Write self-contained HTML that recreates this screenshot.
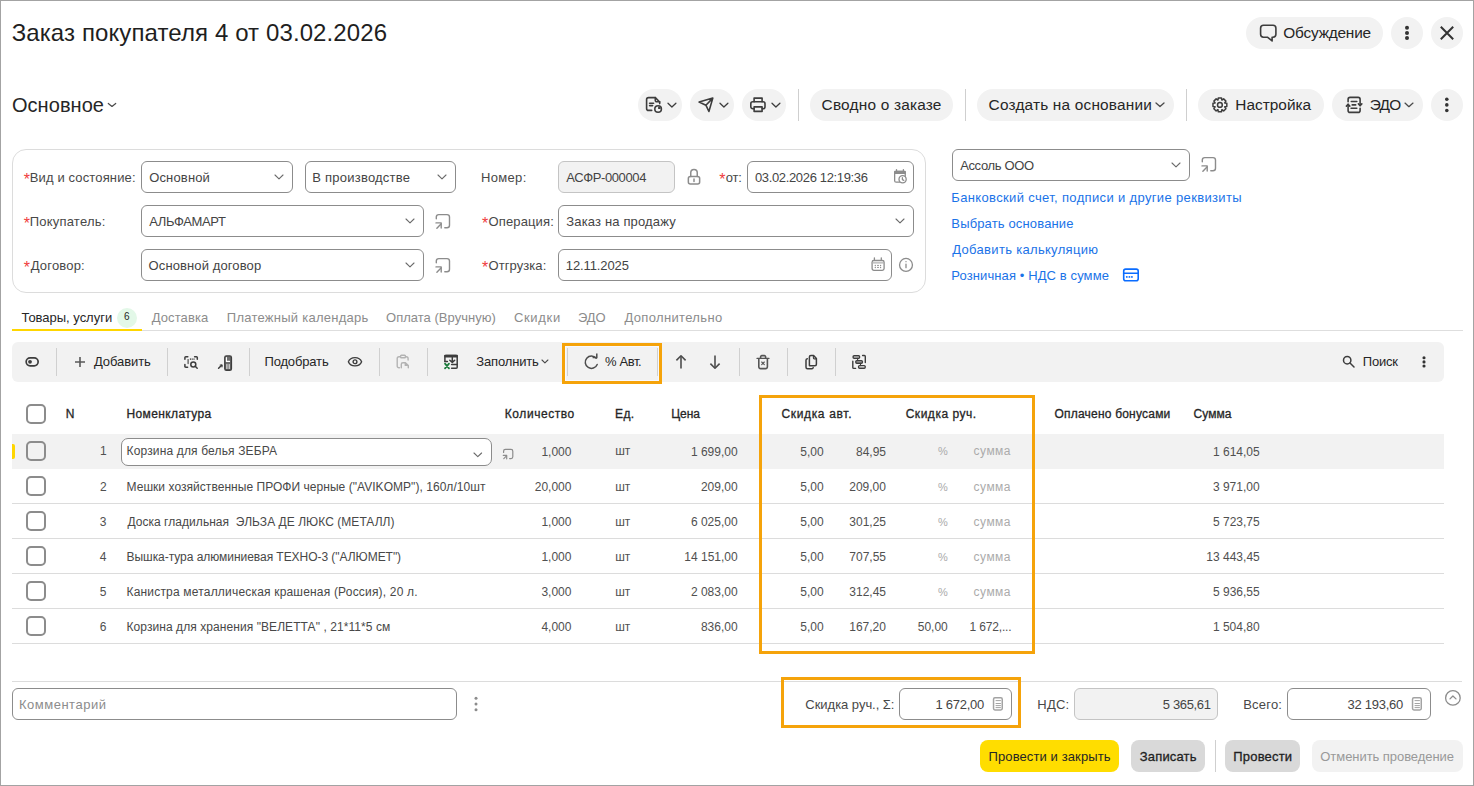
<!DOCTYPE html>
<html><head><meta charset="utf-8"><style>
html,body{margin:0;padding:0;background:#fff;}
body{width:1474px;height:786px;position:relative;overflow:hidden;font-family:'Liberation Sans', sans-serif;}
.a{position:absolute;box-sizing:content-box;}
.t{white-space:pre;}
svg.a{overflow:visible}
</style></head><body>
<div class="a" style="left:0px;top:0px;width:1472px;height:784px;border:1px solid #a3a3a3;background:#fff"></div>
<div class="a t" style="left:11.70px;top:20.68px;font-size:24px;line-height:24px;color:#1f1f1f;letter-spacing:0.105px;">Заказ покупателя 4 от 03.02.2026</div>
<div class="a" style="left:1246px;top:17px;width:137px;height:32px;background:#f2f2f2;border-radius:16.0px"></div>
<div class="a" style="left:1391px;top:17px;width:32px;height:32px;background:#f2f2f2;border-radius:16.0px"></div>
<div class="a" style="left:1431px;top:17px;width:32px;height:32px;background:#f2f2f2;border-radius:16.0px"></div>
<svg class="a" style="left:1258px;top:23px;" width="20" height="20" viewBox="0 0 20 20" fill="none" stroke="#3d3d3d" stroke-width="1.6" stroke-linecap="round" stroke-linejoin="round"><path d="M5.5 14.2 H9.4 L14.1 17.9 V14.2 H15 A2.9 2.9 0 0 0 17.9 11.3 V5.2 A2.9 2.9 0 0 0 15 2.3 H5.5 A2.9 2.9 0 0 0 2.6 5.2 V11.3 A2.9 2.9 0 0 0 5.5 14.2 Z"/></svg>
<div class="a t" style="left:1283.30px;top:24.96px;font-size:15.4px;line-height:15.4px;color:#262626;letter-spacing:-0.206px;">Обсуждение</div>
<svg class="a" style="left:1400px;top:22px;" width="14" height="22" viewBox="0 0 14 22" fill="none" stroke="#3d3d3d" stroke-width="1.5" stroke-linecap="round" stroke-linejoin="round"><circle cx="7" cy="5.8" r="2" fill="#333" stroke="none"/><circle cx="7" cy="11" r="2" fill="#333" stroke="none"/><circle cx="7" cy="16" r="2" fill="#333" stroke="none"/></svg>
<svg class="a" style="left:1437px;top:23px;stroke-linecap:butt" width="20" height="20" viewBox="0 0 20 20" fill="none" stroke="#333" stroke-width="2" stroke-linecap="round" stroke-linejoin="round"><path d="M3.8 3.8 L16.2 16.2 M16.2 3.8 L3.8 16.2"/></svg>
<div class="a t" style="left:11.95px;top:95.07px;font-size:20px;line-height:20px;color:#262626;letter-spacing:0.057px;">Основное</div>
<svg class="a" style="left:106px;top:101px;" width="12" height="8" viewBox="0 0 12 8" fill="none" stroke="#4a4a4a" stroke-width="1.2" stroke-linecap="round" stroke-linejoin="round"><path d="M2.3 2.5 L6 5.5 L9.7 2.5"/></svg>
<div class="a" style="left:638px;top:89px;width:44px;height:32px;background:#f2f2f2;border-radius:16.0px"></div>
<div class="a" style="left:690px;top:89px;width:44px;height:32px;background:#f2f2f2;border-radius:16.0px"></div>
<div class="a" style="left:742px;top:89px;width:44px;height:32px;background:#f2f2f2;border-radius:16.0px"></div>
<svg class="a" style="left:640px;top:92px;" width="44" height="26" viewBox="0 0 44 26" fill="none" stroke="#3d3d3d" stroke-width="1.6" stroke-linecap="round" stroke-linejoin="round"><path d="M11.7 18.4 H8.6 A2 2 0 0 1 6.6 16.4 V7.6 A2 2 0 0 1 8.6 5.6 H15.3 L19.7 10 V11.6"/><path d="M15.3 5.6 V8.4 A1.4 1.4 0 0 0 16.7 9.8 H19.7"/><path d="M9.6 11.2 H13.6 M9.6 13.6 H12.6"/><circle cx="18.1" cy="17" r="3.3"/><path d="M18.1 17 V14.5 A2.5 2.5 0 0 1 20.6 17 Z" fill="#3d3d3d" stroke="none"/><path d="M28 11.3 L31.9 15 L35.9 11.3" stroke-width="1.3"/></svg>
<svg class="a" style="left:692px;top:92px;" width="44" height="26" viewBox="0 0 44 26" fill="none" stroke="#3d3d3d" stroke-width="1.6" stroke-linecap="round" stroke-linejoin="round"><path d="M7.1 10.1 L20.8 6.1 L16.9 19.5 L13.9 13.2 Z M13.9 13.2 L20.8 6.1"/><path d="M28 11.3 L31.9 15 L35.9 11.3" stroke-width="1.3"/></svg>
<svg class="a" style="left:744px;top:92px;" width="44" height="26" viewBox="0 0 44 26" fill="none" stroke="#3d3d3d" stroke-width="1.6" stroke-linecap="round" stroke-linejoin="round"><path d="M10.1 16.7 H8.8 A2 2 0 0 1 6.8 14.7 V11.7 A2 2 0 0 1 8.8 9.7 H19 A2 2 0 0 1 21 11.7 V14.7 A2 2 0 0 1 19 16.7 H18.1"/><path d="M10.1 9.7 V6.1 H18.1 V9.7"/><rect x="10.1" y="14.9" width="8" height="4.5"/><path d="M28 11.3 L31.9 15 L35.9 11.3" stroke-width="1.3"/></svg>
<div class="a" style="left:798px;top:89px;width:1px;height:32px;background:#cfcfcf"></div>
<div class="a" style="left:810px;top:89px;width:143px;height:32px;background:#f2f2f2;border-radius:16.0px"></div>
<div class="a t" style="left:821.60px;top:96.76px;font-size:15.4px;line-height:15.4px;color:#262626;letter-spacing:0.200px;">Сводно о заказе</div>
<div class="a" style="left:965px;top:89px;width:1px;height:32px;background:#cfcfcf"></div>
<div class="a" style="left:977px;top:89px;width:197px;height:32px;background:#f2f2f2;border-radius:16.0px"></div>
<div class="a t" style="left:988.60px;top:96.76px;font-size:15.4px;line-height:15.4px;color:#262626;letter-spacing:0.189px;">Создать на основании</div>
<svg class="a" style="left:1154px;top:101px;" width="12" height="8" viewBox="0 0 12 8" fill="none" stroke="#4a4a4a" stroke-width="1.3" stroke-linecap="round" stroke-linejoin="round"><path d="M2 2 L6 5.6 L10 2"/></svg>
<div class="a" style="left:1186px;top:89px;width:1px;height:32px;background:#cfcfcf"></div>
<div class="a" style="left:1198px;top:89px;width:126px;height:32px;background:#f2f2f2;border-radius:16.0px"></div>
<svg class="a" style="left:1210px;top:95px;" width="20" height="20" viewBox="0 0 20 20" fill="none" stroke="#3d3d3d" stroke-width="1.5" stroke-linecap="round" stroke-linejoin="round"><path d="M7.95 5.08 L8.30 2.98 L11.50 2.98 L11.85 5.08 L11.93 5.11 L13.66 3.88 L15.92 6.14 L14.69 7.87 L14.72 7.95 L16.82 8.30 L16.82 11.50 L14.72 11.85 L14.69 11.93 L15.92 13.66 L13.66 15.92 L11.93 14.69 L11.85 14.72 L11.50 16.82 L8.30 16.82 L7.95 14.72 L7.87 14.69 L6.14 15.92 L3.88 13.66 L5.11 11.93 L5.08 11.85 L2.98 11.50 L2.98 8.30 L5.08 7.95 L5.11 7.87 L3.88 6.14 L6.14 3.88 L7.87 5.11 Z"/><circle cx="9.9" cy="9.9" r="2.4"/></svg>
<div class="a t" style="left:1235.25px;top:96.76px;font-size:15.4px;line-height:15.4px;color:#262626;letter-spacing:0.019px;">Настройка</div>
<div class="a" style="left:1332px;top:89px;width:91px;height:32px;background:#f2f2f2;border-radius:16.0px"></div>
<svg class="a" style="left:1340px;top:92px;" width="30" height="26" viewBox="0 0 30 26" fill="none" stroke="#3d3d3d" stroke-width="1.6" stroke-linecap="round" stroke-linejoin="round"><path d="M8.1 9.8 V7.4 A2 2 0 0 1 10.1 5.4 H18.1 A2 2 0 0 1 20.1 7.4 V13.4"/><path d="M18.4 11.9 L20.1 13.6 L21.8 11.9"/><path d="M20.1 16.3 V18.4 A2 2 0 0 1 18.1 20.4 H10.1 A2 2 0 0 1 8.1 18.4 V12.4"/><path d="M6.4 14.1 L8.1 12.4 L9.8 14.1"/><path d="M11.3 9.5 H16.8 M12.2 12.9 H15.7 M11.1 16.2 H16.8"/></svg>
<div class="a t" style="left:1369.70px;top:96.76px;font-size:15.4px;line-height:15.4px;color:#262626;letter-spacing:-0.725px;">ЭДО</div>
<svg class="a" style="left:1403px;top:101px;" width="12" height="8" viewBox="0 0 12 8" fill="none" stroke="#4a4a4a" stroke-width="1.3" stroke-linecap="round" stroke-linejoin="round"><path d="M2 2.1 L5.9 5.65 L10 2.1"/></svg>
<div class="a" style="left:1431px;top:89px;width:32px;height:32px;background:#f2f2f2;border-radius:16.0px"></div>
<svg class="a" style="left:1440px;top:94px;" width="14" height="22" viewBox="0 0 14 22" fill="none" stroke="#3d3d3d" stroke-width="1.5" stroke-linecap="round" stroke-linejoin="round"><circle cx="6.8" cy="5.3" r="1.8" fill="#333" stroke="none"/><circle cx="6.8" cy="10.9" r="1.8" fill="#333" stroke="none"/><circle cx="6.8" cy="16.5" r="1.8" fill="#333" stroke="none"/></svg>
<div class="a" style="left:12px;top:149px;width:912px;height:142px;border:1px solid #dcdcdc;border-radius:14px"></div>
<div class="a t" style="left:23.75px;top:171.86px;font-size:16px;line-height:16px;color:#f03c3c;">*</div>
<div class="a t" style="left:29.75px;top:171.00px;font-size:13px;line-height:13px;color:#484848;letter-spacing:0.137px;">Вид и состояние:</div>
<div class="a" style="left:141px;top:161px;width:150px;height:30px;border:1px solid #8c8c8c;border-radius:6px;background:#fff"></div>
<svg class="a" style="left:273px;top:173.0px;" width="12" height="7.8" viewBox="0 0 12 7.8" fill="none" stroke="#6b6b6b" stroke-width="1.1" stroke-linecap="round" stroke-linejoin="round"><path d="M2 2 L6 5.8 L10 2"/></svg>
<div class="a t" style="left:149.20px;top:171.00px;font-size:13px;line-height:13px;color:#444;letter-spacing:0.157px;">Основной</div>
<div class="a" style="left:305px;top:161px;width:149px;height:30px;border:1px solid #8c8c8c;border-radius:6px;background:#fff"></div>
<svg class="a" style="left:436px;top:173.0px;" width="12" height="7.8" viewBox="0 0 12 7.8" fill="none" stroke="#6b6b6b" stroke-width="1.1" stroke-linecap="round" stroke-linejoin="round"><path d="M2 2 L6 5.8 L10 2"/></svg>
<div class="a t" style="left:312.35px;top:171.00px;font-size:13px;line-height:13px;color:#444;letter-spacing:0.223px;">В производстве</div>
<div class="a t" style="left:23.75px;top:215.86px;font-size:16px;line-height:16px;color:#f03c3c;">*</div>
<div class="a t" style="left:29.75px;top:215.00px;font-size:13px;line-height:13px;color:#484848;letter-spacing:0.205px;">Покупатель:</div>
<div class="a" style="left:141px;top:205px;width:281px;height:30px;border:1px solid #8c8c8c;border-radius:6px;background:#fff"></div>
<svg class="a" style="left:404px;top:217.0px;" width="12" height="7.8" viewBox="0 0 12 7.8" fill="none" stroke="#6b6b6b" stroke-width="1.1" stroke-linecap="round" stroke-linejoin="round"><path d="M2 2 L6 5.8 L10 2"/></svg>
<div class="a t" style="left:149.15px;top:215.00px;font-size:13px;line-height:13px;color:#444;letter-spacing:-0.375px;">АЛЬФАМАРТ</div>
<svg class="a" style="left:435px;top:213px;" width="17" height="17" viewBox="0 0 17 17" fill="none" stroke="#8c8c8c" stroke-width="1.4" stroke-linecap="round" stroke-linejoin="round"><path d="M1.3 5.8 V4.1 A2.5 2.5 0 0 1 3.8 1.6 H12 A2.5 2.5 0 0 1 14.5 4.1 V12.3 A2.5 2.5 0 0 1 12 14.8 H9.8"/><path d="M1.9 15.2 L6 11.1"/><path d="M1.0 9.9 H6.2 V15.1"/></svg>
<div class="a t" style="left:23.75px;top:259.86px;font-size:16px;line-height:16px;color:#f03c3c;">*</div>
<div class="a t" style="left:30.70px;top:259.00px;font-size:13px;line-height:13px;color:#484848;letter-spacing:0.193px;">Договор:</div>
<div class="a" style="left:141px;top:249px;width:281px;height:30px;border:1px solid #8c8c8c;border-radius:6px;background:#fff"></div>
<svg class="a" style="left:404px;top:261.0px;" width="12" height="7.8" viewBox="0 0 12 7.8" fill="none" stroke="#6b6b6b" stroke-width="1.1" stroke-linecap="round" stroke-linejoin="round"><path d="M2 2 L6 5.8 L10 2"/></svg>
<div class="a t" style="left:148.60px;top:259.00px;font-size:13px;line-height:13px;color:#444;letter-spacing:0.107px;">Основной договор</div>
<svg class="a" style="left:435px;top:257px;" width="17" height="17" viewBox="0 0 17 17" fill="none" stroke="#8c8c8c" stroke-width="1.4" stroke-linecap="round" stroke-linejoin="round"><path d="M1.3 5.8 V4.1 A2.5 2.5 0 0 1 3.8 1.6 H12 A2.5 2.5 0 0 1 14.5 4.1 V12.3 A2.5 2.5 0 0 1 12 14.8 H9.8"/><path d="M1.9 15.2 L6 11.1"/><path d="M1.0 9.9 H6.2 V15.1"/></svg>
<div class="a t" style="left:481.05px;top:171.00px;font-size:13px;line-height:13px;color:#484848;letter-spacing:0.320px;">Номер:</div>
<div class="a" style="left:558px;top:161px;width:115px;height:30px;border:1px solid #c4c4c4;border-radius:6px;background:#f2f2f2"></div>
<div class="a t" style="left:566.15px;top:171.00px;font-size:13px;line-height:13px;color:#444;letter-spacing:-0.380px;">АСФР-000004</div>
<svg class="a" style="left:686px;top:167px;" width="16" height="19" viewBox="0 0 16 19" fill="none" stroke="#8c8c8c" stroke-width="1.5" stroke-linecap="round" stroke-linejoin="round"><rect x="2.35" y="9.45" width="11.3" height="7.6" rx="2"/><path d="M4.75 9.45 V5.7 A3.25 3.25 0 0 1 11.25 5.7 V9.45"/><path d="M8 12 V14.6"/></svg>
<div class="a t" style="left:719.15px;top:171.86px;font-size:16px;line-height:16px;color:#f03c3c;">*</div>
<div class="a t" style="left:725.85px;top:171.00px;font-size:13px;line-height:13px;color:#484848;letter-spacing:-0.200px;">от:</div>
<div class="a" style="left:747px;top:161px;width:165px;height:30px;border:1px solid #8c8c8c;border-radius:6px;background:#fff"></div>
<div class="a t" style="left:754.90px;top:171.00px;font-size:13px;line-height:13px;color:#444;letter-spacing:-0.344px;">03.02.2026 12:19:36</div>
<svg class="a" style="left:892px;top:168px;" width="17" height="17" viewBox="0 0 17 17" fill="none" stroke="#8c8c8c" stroke-width="1.3" stroke-linecap="round" stroke-linejoin="round"><rect x="2.65" y="3.45" width="10.6" height="10.7" rx="1.5"/><rect x="2" y="2.8" width="11.9" height="3.2" rx="1" fill="#8c8c8c" stroke="none"/><path d="M4.5 1.6 V3.5 M11.4 1.6 V3.5"/><circle cx="10.6" cy="11.3" r="3.6" fill="#fff"/><path d="M10.4 9.7 V11.6 L11.8 12.4"/></svg>
<div class="a t" style="left:482.05px;top:215.86px;font-size:16px;line-height:16px;color:#f03c3c;">*</div>
<div class="a t" style="left:488.50px;top:215.00px;font-size:13px;line-height:13px;color:#484848;letter-spacing:0.131px;">Операция:</div>
<div class="a" style="left:558px;top:205px;width:354px;height:30px;border:1px solid #8c8c8c;border-radius:6px;background:#fff"></div>
<svg class="a" style="left:894px;top:217.0px;" width="12" height="7.8" viewBox="0 0 12 7.8" fill="none" stroke="#6b6b6b" stroke-width="1.1" stroke-linecap="round" stroke-linejoin="round"><path d="M2 2 L6 5.8 L10 2"/></svg>
<div class="a t" style="left:566.35px;top:215.00px;font-size:13px;line-height:13px;color:#444;letter-spacing:0.147px;">Заказ на продажу</div>
<div class="a t" style="left:482.05px;top:259.86px;font-size:16px;line-height:16px;color:#f03c3c;">*</div>
<div class="a t" style="left:488.50px;top:259.00px;font-size:13px;line-height:13px;color:#484848;letter-spacing:0.075px;">Отгрузка:</div>
<div class="a" style="left:558px;top:249px;width:332px;height:30px;border:1px solid #8c8c8c;border-radius:6px;background:#fff"></div>
<div class="a t" style="left:565.80px;top:259.00px;font-size:13px;line-height:13px;color:#444;letter-spacing:-0.106px;">12.11.2025</div>
<svg class="a" style="left:869px;top:255px;" width="18" height="18" viewBox="0 0 18 18" fill="none" stroke="#8c8c8c" stroke-width="1.3" stroke-linecap="round" stroke-linejoin="round"><rect x="3.1" y="5.5" width="12" height="9.8" rx="1.8"/><path d="M5.4 2.8 V4.8 M12.3 2.8 V4.8"/><path d="M3.1 7.9 H15.1" stroke="#b0b0b0" stroke-width="1.4"/><g fill="#8c8c8c" stroke="none"><circle cx="6.3" cy="10.5" r="0.65"/><rect x="8.2" y="9.9" width="1.6" height="1.1"/><circle cx="11.6" cy="10.5" r="0.65"/><circle cx="6.3" cy="12.5" r="0.65"/><rect x="8.2" y="11.9" width="1.6" height="1.1"/><circle cx="11.6" cy="12.5" r="0.65"/></g></svg>
<svg class="a" style="left:898px;top:257px;" width="16" height="16" viewBox="0 0 16 16" fill="none" stroke="#8c8c8c" stroke-width="1.3" stroke-linecap="round" stroke-linejoin="round"><circle cx="8" cy="7.9" r="6.45"/><path d="M8 4.6 V4.7 M8 7.1 V10.7"/></svg>
<div class="a" style="left:952px;top:149px;width:236px;height:30px;border:1px solid #8c8c8c;border-radius:6px;background:#fff"></div>
<svg class="a" style="left:1170px;top:161.0px;" width="12" height="7.8" viewBox="0 0 12 7.8" fill="none" stroke="#6b6b6b" stroke-width="1.1" stroke-linecap="round" stroke-linejoin="round"><path d="M2 2 L6 5.8 L10 2"/></svg>
<div class="a t" style="left:960.15px;top:159.00px;font-size:13px;line-height:13px;color:#444;letter-spacing:-0.356px;">Ассоль ООО</div>
<svg class="a" style="left:1201px;top:156px;" width="17" height="17" viewBox="0 0 17 17" fill="none" stroke="#8c8c8c" stroke-width="1.4" stroke-linecap="round" stroke-linejoin="round"><path d="M1.3 5.8 V4.1 A2.5 2.5 0 0 1 3.8 1.6 H12 A2.5 2.5 0 0 1 14.5 4.1 V12.3 A2.5 2.5 0 0 1 12 14.8 H9.8"/><path d="M1.9 15.2 L6 11.1"/><path d="M1.0 9.9 H6.2 V15.1"/></svg>
<div class="a t" style="left:951.35px;top:190.60px;font-size:13px;line-height:13px;color:#1a73e8;letter-spacing:0.346px;">Банковский счет, подписи и другие реквизиты</div>
<div class="a t" style="left:951.35px;top:216.60px;font-size:13px;line-height:13px;color:#1a73e8;letter-spacing:0.147px;">Выбрать основание</div>
<div class="a t" style="left:952.30px;top:242.60px;font-size:13px;line-height:13px;color:#1a73e8;letter-spacing:0.311px;">Добавить калькуляцию</div>
<div class="a t" style="left:951.35px;top:268.60px;font-size:13px;line-height:13px;color:#1a73e8;letter-spacing:0.105px;">Розничная • НДС в сумме</div>
<svg class="a" style="left:1121px;top:266px;" width="20" height="18" viewBox="0 0 20 18" fill="none" stroke="#0a6cff" stroke-width="1.6" stroke-linecap="round" stroke-linejoin="round"><rect x="2.7" y="3.1" width="14.5" height="11.6" rx="2"/><path d="M2.7 7.2 H17.2"/><g fill="#0a6cff" stroke="none"><circle cx="5.8" cy="10.9" r="0.95"/><circle cx="8.4" cy="10.9" r="0.95"/><circle cx="10.9" cy="10.9" r="0.95"/></g></svg>
<div class="a t" style="left:21.50px;top:311.00px;font-size:13px;line-height:13px;color:#262626;letter-spacing:-0.019px;">Товары, услуги</div>
<div class="a" style="left:117px;top:308px;width:20px;height:20px;background:#e3f8e8;border-radius:10px"></div>
<div class="a t" style="left:123.97px;top:311.54px;font-size:10px;line-height:10px;color:#262626;">6</div>
<div class="a t" style="left:151.70px;top:311.00px;font-size:13px;line-height:13px;color:#8c8c8c;letter-spacing:0.107px;">Доставка</div>
<div class="a t" style="left:226.85px;top:311.00px;font-size:13px;line-height:13px;color:#8c8c8c;letter-spacing:0.250px;">Платежный календарь</div>
<div class="a t" style="left:386.00px;top:311.00px;font-size:13px;line-height:13px;color:#8c8c8c;letter-spacing:0.023px;">Оплата (Вручную)</div>
<div class="a t" style="left:513.95px;top:311.00px;font-size:13px;line-height:13px;color:#8c8c8c;letter-spacing:0.680px;">Скидки</div>
<div class="a t" style="left:578.10px;top:311.00px;font-size:13px;line-height:13px;color:#8c8c8c;letter-spacing:-0.150px;">ЭДО</div>
<div class="a t" style="left:624.40px;top:311.00px;font-size:13px;line-height:13px;color:#8c8c8c;letter-spacing:0.354px;">Дополнительно</div>
<div class="a" style="left:12px;top:330px;width:1451px;height:1px;background:#dedede"></div>
<div class="a" style="left:12px;top:329px;width:130px;height:2px;background:#ffd600"></div>
<div class="a" style="left:12px;top:342px;width:1432px;height:40px;background:#f2f2f2;border-radius:6px"></div>
<div class="a" style="left:56px;top:348px;width:1px;height:28px;background:#d0d0d0"></div>
<div class="a" style="left:167px;top:348px;width:1px;height:28px;background:#d0d0d0"></div>
<div class="a" style="left:249px;top:348px;width:1px;height:28px;background:#d0d0d0"></div>
<div class="a" style="left:379px;top:348px;width:1px;height:28px;background:#d0d0d0"></div>
<div class="a" style="left:427px;top:348px;width:1px;height:28px;background:#d0d0d0"></div>
<div class="a" style="left:567px;top:348px;width:1px;height:28px;background:#d0d0d0"></div>
<div class="a" style="left:657px;top:348px;width:1px;height:28px;background:#d0d0d0"></div>
<div class="a" style="left:739px;top:348px;width:1px;height:28px;background:#d0d0d0"></div>
<div class="a" style="left:787px;top:348px;width:1px;height:28px;background:#d0d0d0"></div>
<div class="a" style="left:835px;top:348px;width:1px;height:28px;background:#d0d0d0"></div>
<svg class="a" style="left:22px;top:352px;" width="20" height="20" viewBox="0 0 20 20" fill="none" stroke="#3d3d3d" stroke-width="1.7" stroke-linecap="round" stroke-linejoin="round"><rect x="4.15" y="5.85" width="12" height="8" rx="4"/><circle cx="8" cy="9.8" r="1.9" fill="#3d3d3d" stroke="none"/></svg>
<svg class="a" style="left:72px;top:354px;stroke-linecap:butt" width="16" height="16" viewBox="0 0 16 16" fill="none" stroke="#595959" stroke-width="1.6" stroke-linecap="round" stroke-linejoin="round"><path d="M8 3 V13 M3 8 H13"/></svg>
<div class="a t" style="left:93.90px;top:355.00px;font-size:13px;line-height:13px;color:#262626;letter-spacing:-0.079px;">Добавить</div>
<svg class="a" style="left:180px;top:352px;" width="22" height="20" viewBox="0 0 22 20" fill="none" stroke="#3d3d3d" stroke-width="1.5" stroke-linecap="round" stroke-linejoin="round"><path d="M4.9 7.2 V5.6 A0.9 0.9 0 0 1 5.8 4.7 H7.8 M14.6 4.7 H16.4 A0.9 0.9 0 0 1 17.3 5.6 V7.2 M4.9 12.6 V14.4 A0.9 0.9 0 0 0 5.8 15.3 H7.6"/><path d="M8.1 7.6 V11.6" stroke-width="1.1"/><circle cx="13.3" cy="12.4" r="2.5"/><path d="M15.2 14.3 L17.2 16.3"/><path d="M10.4 6.7 V7.6 M12.2 6.7 V7.6 M14 6.7 V7.6" stroke-width="0.9"/></svg>
<svg class="a" style="left:214px;top:352px;" width="22" height="20" viewBox="0 0 22 20" fill="none" stroke="#3d3d3d" stroke-width="1.5" stroke-linecap="round" stroke-linejoin="round"><rect x="10.8" y="3.9" width="6.6" height="14.4" rx="1.6" fill="#6e6e6e" stroke="#3d3d3d" stroke-width="1.4"/><path d="M12.4 5.6 V9.4 H15.5" stroke="#fff" stroke-width="1.2"/><path d="M12.9 12.5 V16.6 M15.2 12.5 V16.6" stroke="#fff" stroke-width="0.9"/><path d="M4.6 16.3 L7.7 13.2"/><path d="M6.2 13 H8 V14.8" stroke-width="1.2"/></svg>
<div class="a t" style="left:264.45px;top:355.00px;font-size:13px;line-height:13px;color:#262626;letter-spacing:-0.150px;">Подобрать</div>
<svg class="a" style="left:346px;top:352px;" width="18" height="20" viewBox="0 0 18 20" fill="none" stroke="#3d3d3d" stroke-width="1.4" stroke-linecap="round" stroke-linejoin="round"><path d="M2.4 9.75 C4.6 4.2 13.4 4.2 15.6 9.75 C13.4 15.3 4.6 15.3 2.4 9.75 Z"/><circle cx="9" cy="9.75" r="1.9"/></svg>
<svg class="a" style="left:394px;top:352px;" width="18" height="20" viewBox="0 0 18 20" fill="none" stroke="#b3b3b3" stroke-width="1.4" stroke-linecap="round" stroke-linejoin="round"><path d="M5.4 15.8 H5 A1.8 1.8 0 0 1 3.2 14 V6.6 A1.8 1.8 0 0 1 5 4.8 H6.3 M11.9 4.8 H12.3 A1.8 1.8 0 0 1 14.1 6.6 V8"/><rect x="6.6" y="3.3" width="4.8" height="2.5" rx="0.8"/><path d="M7.3 15.8 V12.3 A1.6 1.6 0 0 1 8.9 10.7 H11.4 L14.3 13.6 V15.8 M11.3 10.8 V13.4 H14.2"/></svg>
<svg class="a" style="left:436px;top:350px;" width="26" height="24" viewBox="0 0 26 24" fill="none" stroke="#3d3d3d" stroke-width="1.5" stroke-linecap="round" stroke-linejoin="round"><path d="M8.9 11.4 V6.4 A1 1 0 0 1 9.9 5.4 H20.2 A1 1 0 0 1 21.2 6.4 V17.2 A1 1 0 0 1 20.2 18.2 H15.6"/><rect x="8.2" y="4.8" width="13.7" height="2.6" rx="0.8" fill="#3d3d3d" stroke="none"/><path d="M8.9 11.4 H11.4"/><path d="M16.3 7.5 V12.2 M13.8 10.2 L16.3 12.4 L18.7 10.2"/><path d="M15.6 14.5 H21"/><path d="M9 13.6 L13 18.4 M13 13.6 L9 18.4" stroke="#1b7a3b" stroke-width="1.7"/></svg>
<div class="a t" style="left:476.35px;top:355.00px;font-size:13px;line-height:13px;color:#262626;letter-spacing:-0.169px;">Заполнить</div>
<svg class="a" style="left:540px;top:358px;" width="10" height="7" viewBox="0 0 10 7" fill="none" stroke="#4a4a4a" stroke-width="1.1" stroke-linecap="round" stroke-linejoin="round"><path d="M2 2 L4.9 4.8 L7.9 2"/></svg>
<svg class="a" style="left:580.5px;top:352px;" width="20" height="20" viewBox="0 0 20 20" fill="none" stroke="#4d4d4d" stroke-width="1.5" stroke-linecap="round" stroke-linejoin="round"><path d="M15.2 6.2 A6.2 6.2 0 1 0 16.2 12.5"/><path d="M11.6 5.4 H15.8 V1.6" stroke-linecap="butt" stroke-linejoin="miter"/></svg>
<div class="a t" style="left:604.95px;top:355.00px;font-size:13px;line-height:13px;color:#262626;letter-spacing:-0.360px;">% Авт.</div>
<svg class="a" style="left:671px;top:352px;stroke-linecap:butt" width="20" height="20" viewBox="0 0 20 20" fill="none" stroke="#4d4d4d" stroke-width="1.6" stroke-linecap="round" stroke-linejoin="round"><path d="M10 4 V16.4"/><path d="M5.4 8.4 L10 3.8 L14.6 8.4"/></svg>
<svg class="a" style="left:705px;top:352px;stroke-linecap:butt" width="20" height="20" viewBox="0 0 20 20" fill="none" stroke="#4d4d4d" stroke-width="1.6" stroke-linecap="round" stroke-linejoin="round"><path d="M10 3.4 V15.8"/><path d="M5.4 11.6 L10 16.2 L14.6 11.6"/></svg>
<svg class="a" style="left:753px;top:352px;" width="20" height="20" viewBox="0 0 20 20" fill="none" stroke="#555" stroke-width="1.6" stroke-linecap="round" stroke-linejoin="round"><path d="M4 6.4 H16" stroke-width="1.2"/><path d="M7.6 6.2 V4.8 A1.2 1.2 0 0 1 8.8 3.6 H11.4 A1.2 1.2 0 0 1 12.6 4.8 V6.2"/><path d="M5.8 6.8 V14.8 A1.8 1.8 0 0 0 7.6 16.6 H12.6 A1.8 1.8 0 0 0 14.4 14.8 V6.8"/><path d="M8.7 10 L11.3 12.7 M11.3 10 L8.7 12.7" stroke-width="1.1"/></svg>
<svg class="a" style="left:801px;top:352px;" width="20" height="20" viewBox="0 0 20 20" fill="none" stroke="#3d3d3d" stroke-width="1.5" stroke-linecap="round" stroke-linejoin="round"><path d="M6.3 6.8 A1.5 1.5 0 0 0 5 8.3 V15.2 A1.5 1.5 0 0 0 6.5 16.7 H10.9 A1.5 1.5 0 0 0 12.2 15.6"/><path d="M8.4 13.6 V5.1 A1.5 1.5 0 0 1 9.9 3.6 H12.6 L15.4 6.6 V12.2 A1.5 1.5 0 0 1 13.9 13.7 H9.8 A1.5 1.5 0 0 1 8.4 13.6 Z"/><path d="M12.4 3.8 V6.1 A0.8 0.8 0 0 0 13.2 6.9 H15.3" stroke-width="1.1"/></svg>
<svg class="a" style="left:845px;top:350px;" width="30" height="24" viewBox="0 0 30 24" fill="none" stroke="#3d3d3d" stroke-width="1.4" stroke-linecap="round" stroke-linejoin="round"><rect x="8.1" y="5.7" width="6.5" height="2.6" rx="1"/><rect x="10.8" y="10.6" width="6.6" height="2.6" rx="1" fill="#aaa"/><rect x="13.6" y="15.6" width="6.6" height="2.6" rx="1"/><path d="M17.6 5.5 H19.4 A0.9 0.9 0 0 1 20.3 6.4 V12.5"/><path d="M7.8 11.2 V17.4 A1 1 0 0 0 8.8 18.4 H10.6"/><path d="M12.6 8.3 V10.6 M15.5 13.2 V15.6" stroke-width="1.1"/></svg>
<svg class="a" style="left:1339px;top:352px;" width="20" height="20" viewBox="0 0 20 20" fill="none" stroke="#3d3d3d" stroke-width="1.5" stroke-linecap="round" stroke-linejoin="round"><circle cx="8.2" cy="8.2" r="3.7"/><path d="M11 11 L15 15"/></svg>
<div class="a t" style="left:1362.75px;top:355.00px;font-size:13px;line-height:13px;color:#262626;letter-spacing:-0.188px;">Поиск</div>
<svg class="a" style="left:1417px;top:352px;" width="14" height="20" viewBox="0 0 14 20" fill="none" stroke="#3d3d3d" stroke-width="1.5" stroke-linecap="round" stroke-linejoin="round"><circle cx="7" cy="5.8" r="1.55" fill="#333" stroke="none"/><circle cx="7" cy="9.9" r="1.55" fill="#333" stroke="none"/><circle cx="7" cy="14" r="1.55" fill="#333" stroke="none"/></svg>
<div class="a" style="left:562px;top:343px;width:94px;height:35px;border:3px solid #f5a30a;box-shadow:inset 0 0 0 1px #f7f9ff"></div>
<div class="a t" style="left:65.80px;top:407.84px;font-size:12px;line-height:12px;color:#262626;-webkit-text-stroke:0.3px #262626;">N</div>
<div class="a t" style="left:126.50px;top:407.84px;font-size:12px;line-height:12px;color:#262626;-webkit-text-stroke:0.3px #262626;letter-spacing:0.377px;">Номенклатура</div>
<div class="a t" style="left:504.80px;top:407.84px;font-size:12px;line-height:12px;color:#262626;-webkit-text-stroke:0.3px #262626;letter-spacing:0.561px;">Количество</div>
<div class="a t" style="left:615.00px;top:407.84px;font-size:12px;line-height:12px;color:#262626;-webkit-text-stroke:0.3px #262626;letter-spacing:0.425px;">Ед.</div>
<div class="a t" style="left:671.20px;top:407.84px;font-size:12px;line-height:12px;color:#262626;-webkit-text-stroke:0.3px #262626;">Цена</div>
<div class="a t" style="left:781.40px;top:407.84px;font-size:12px;line-height:12px;color:#262626;-webkit-text-stroke:0.3px #262626;letter-spacing:0.665px;">Скидка авт.</div>
<div class="a t" style="left:905.70px;top:407.84px;font-size:12px;line-height:12px;color:#262626;-webkit-text-stroke:0.3px #262626;letter-spacing:0.520px;">Скидка руч.</div>
<div class="a t" style="left:1054.45px;top:407.84px;font-size:12px;line-height:12px;color:#262626;-webkit-text-stroke:0.3px #262626;letter-spacing:0.212px;">Оплачено бонусами</div>
<div class="a t" style="left:1193.60px;top:407.84px;font-size:12px;line-height:12px;color:#262626;-webkit-text-stroke:0.3px #262626;">Сумма</div>
<div class="a" style="left:26px;top:404px;width:16px;height:16px;border:2px solid #8c8c8c;border-radius:5px;background:#fff"></div>
<div class="a" style="left:12px;top:434px;width:1432px;height:35px;background:#f2f2f2"></div>
<div class="a" style="left:12px;top:444px;width:3px;height:15px;background:#ffd600;border-radius:0 2px 2px 0"></div>
<div class="a" style="left:26px;top:441px;width:16px;height:16px;border:2px solid #8c8c8c;border-radius:5px;background:transparent"></div>
<div class="a t" style="left:99.90px;top:445.24px;font-size:12px;line-height:12px;color:#505050;">1</div>
<div class="a" style="left:121px;top:438px;width:369px;height:26px;border:1px solid #8c8c8c;border-radius:7px;background:#fff"></div>
<svg class="a" style="left:472.09999999999997px;top:450.8px;" width="11.6" height="7.7" viewBox="0 0 11.6 7.7" fill="none" stroke="#6b6b6b" stroke-width="1.1" stroke-linecap="round" stroke-linejoin="round"><path d="M2 2 L5.8 5.7 L9.6 2"/></svg>
<svg class="a" style="left:501px;top:447px;" width="14" height="14" viewBox="0 0 14 14" fill="none" stroke="#8c8c8c" stroke-width="1.2" stroke-linecap="round" stroke-linejoin="round"><path d="M2.6 5.4 V4.2 A1.8 1.8 0 0 1 4.4 2.4 H10 A1.8 1.8 0 0 1 11.8 4.2 V9.8 A1.8 1.8 0 0 1 10 11.6 H8.6"/><path d="M2.8 11.6 L5.5 8.9"/><path d="M2.3 8.4 H5.7 V11.8"/></svg>
<div class="a t" style="left:126.50px;top:445.24px;font-size:12px;line-height:12px;color:#484848;letter-spacing:0.150px;">Корзина для белья ЗЕБРА</div>
<div class="a t" style="left:541.45px;top:445.74px;font-size:12px;line-height:12px;color:#505050;">1,000</div>
<div class="a t" style="left:615.15px;top:445.24px;font-size:12px;line-height:12px;color:#505050;">шт</div>
<div class="a t" style="left:690.95px;top:445.74px;font-size:12px;line-height:12px;color:#505050;">1 699,00</div>
<div class="a t" style="left:800.30px;top:445.74px;font-size:12px;line-height:12px;color:#505050;">5,00</div>
<div class="a t" style="left:856.00px;top:445.74px;font-size:12px;line-height:12px;color:#505050;">84,95</div>
<div class="a t" style="left:938.00px;top:446.09px;font-size:11px;line-height:11px;color:#ababab;">%</div>
<div class="a t" style="left:973.60px;top:445.24px;font-size:12px;line-height:12px;color:#ababab;letter-spacing:0.463px;">сумма</div>
<div class="a t" style="left:1213.00px;top:445.74px;font-size:12px;line-height:12px;color:#505050;">1 614,05</div>
<div class="a" style="left:12px;top:503px;width:1432px;height:1px;background:#dcdcdc"></div>
<div class="a" style="left:26px;top:476px;width:16px;height:16px;border:2px solid #8c8c8c;border-radius:5px;background:transparent"></div>
<div class="a t" style="left:99.90px;top:481.04px;font-size:12px;line-height:12px;color:#505050;">2</div>
<div class="a t" style="left:126.50px;top:481.04px;font-size:12px;line-height:12px;color:#484848;letter-spacing:0.043px;">Мешки хозяйственные ПРОФИ черные (&quot;AVIKOMP&quot;), 160л/10шт</div>
<div class="a t" style="left:534.75px;top:481.04px;font-size:12px;line-height:12px;color:#505050;">20,000</div>
<div class="a t" style="left:615.15px;top:481.04px;font-size:12px;line-height:12px;color:#505050;">шт</div>
<div class="a t" style="left:700.95px;top:481.04px;font-size:12px;line-height:12px;color:#505050;">209,00</div>
<div class="a t" style="left:800.30px;top:481.04px;font-size:12px;line-height:12px;color:#505050;">5,00</div>
<div class="a t" style="left:849.25px;top:481.04px;font-size:12px;line-height:12px;color:#505050;">209,00</div>
<div class="a t" style="left:938.00px;top:481.89px;font-size:11px;line-height:11px;color:#ababab;">%</div>
<div class="a t" style="left:973.60px;top:481.04px;font-size:12px;line-height:12px;color:#ababab;letter-spacing:0.463px;">сумма</div>
<div class="a t" style="left:1212.95px;top:481.04px;font-size:12px;line-height:12px;color:#505050;">3 971,00</div>
<div class="a" style="left:12px;top:538px;width:1432px;height:1px;background:#dcdcdc"></div>
<div class="a" style="left:26px;top:511px;width:16px;height:16px;border:2px solid #8c8c8c;border-radius:5px;background:transparent"></div>
<div class="a t" style="left:99.85px;top:516.04px;font-size:12px;line-height:12px;color:#505050;">3</div>
<div class="a t" style="left:127.40px;top:516.04px;font-size:12px;line-height:12px;color:#484848;letter-spacing:0.045px;">Доска гладильная  ЭЛЬЗА ДЕ ЛЮКС (МЕТАЛЛ)</div>
<div class="a t" style="left:541.45px;top:516.04px;font-size:12px;line-height:12px;color:#505050;">1,000</div>
<div class="a t" style="left:615.15px;top:516.04px;font-size:12px;line-height:12px;color:#505050;">шт</div>
<div class="a t" style="left:690.95px;top:516.04px;font-size:12px;line-height:12px;color:#505050;">6 025,00</div>
<div class="a t" style="left:800.30px;top:516.04px;font-size:12px;line-height:12px;color:#505050;">5,00</div>
<div class="a t" style="left:849.30px;top:516.04px;font-size:12px;line-height:12px;color:#505050;">301,25</div>
<div class="a t" style="left:938.00px;top:516.89px;font-size:11px;line-height:11px;color:#ababab;">%</div>
<div class="a t" style="left:973.60px;top:516.04px;font-size:12px;line-height:12px;color:#ababab;letter-spacing:0.463px;">сумма</div>
<div class="a t" style="left:1213.00px;top:516.04px;font-size:12px;line-height:12px;color:#505050;">5 723,75</div>
<div class="a" style="left:12px;top:573px;width:1432px;height:1px;background:#dcdcdc"></div>
<div class="a" style="left:26px;top:546px;width:16px;height:16px;border:2px solid #8c8c8c;border-radius:5px;background:transparent"></div>
<div class="a t" style="left:99.65px;top:551.04px;font-size:12px;line-height:12px;color:#505050;">4</div>
<div class="a t" style="left:126.50px;top:551.04px;font-size:12px;line-height:12px;color:#484848;letter-spacing:-0.043px;">Вышка-тура алюминиевая ТЕХНО-3 (&quot;АЛЮМЕТ&quot;)</div>
<div class="a t" style="left:541.45px;top:551.04px;font-size:12px;line-height:12px;color:#505050;">1,000</div>
<div class="a t" style="left:615.15px;top:551.04px;font-size:12px;line-height:12px;color:#505050;">шт</div>
<div class="a t" style="left:684.30px;top:551.04px;font-size:12px;line-height:12px;color:#505050;">14 151,00</div>
<div class="a t" style="left:800.30px;top:551.04px;font-size:12px;line-height:12px;color:#505050;">5,00</div>
<div class="a t" style="left:849.30px;top:551.04px;font-size:12px;line-height:12px;color:#505050;">707,55</div>
<div class="a t" style="left:938.00px;top:551.89px;font-size:11px;line-height:11px;color:#ababab;">%</div>
<div class="a t" style="left:973.60px;top:551.04px;font-size:12px;line-height:12px;color:#ababab;letter-spacing:0.463px;">сумма</div>
<div class="a t" style="left:1206.35px;top:551.04px;font-size:12px;line-height:12px;color:#505050;">13 443,45</div>
<div class="a" style="left:12px;top:608px;width:1432px;height:1px;background:#dcdcdc"></div>
<div class="a" style="left:26px;top:581px;width:16px;height:16px;border:2px solid #8c8c8c;border-radius:5px;background:transparent"></div>
<div class="a t" style="left:99.85px;top:586.04px;font-size:12px;line-height:12px;color:#505050;">5</div>
<div class="a t" style="left:126.50px;top:586.04px;font-size:12px;line-height:12px;color:#484848;letter-spacing:0.188px;">Канистра металлическая крашеная (Россия), 20 л.</div>
<div class="a t" style="left:541.45px;top:586.04px;font-size:12px;line-height:12px;color:#505050;">3,000</div>
<div class="a t" style="left:615.15px;top:586.04px;font-size:12px;line-height:12px;color:#505050;">шт</div>
<div class="a t" style="left:690.95px;top:586.04px;font-size:12px;line-height:12px;color:#505050;">2 083,00</div>
<div class="a t" style="left:800.30px;top:586.04px;font-size:12px;line-height:12px;color:#505050;">5,00</div>
<div class="a t" style="left:849.30px;top:586.04px;font-size:12px;line-height:12px;color:#505050;">312,45</div>
<div class="a t" style="left:938.00px;top:586.89px;font-size:11px;line-height:11px;color:#ababab;">%</div>
<div class="a t" style="left:973.60px;top:586.04px;font-size:12px;line-height:12px;color:#ababab;letter-spacing:0.463px;">сумма</div>
<div class="a t" style="left:1213.00px;top:586.04px;font-size:12px;line-height:12px;color:#505050;">5 936,55</div>
<div class="a" style="left:12px;top:643px;width:1432px;height:1px;background:#dcdcdc"></div>
<div class="a" style="left:26px;top:616px;width:16px;height:16px;border:2px solid #8c8c8c;border-radius:5px;background:transparent"></div>
<div class="a t" style="left:99.85px;top:621.04px;font-size:12px;line-height:12px;color:#505050;">6</div>
<div class="a t" style="left:126.50px;top:621.04px;font-size:12px;line-height:12px;color:#484848;letter-spacing:0.071px;">Корзина для хранения &quot;ВЕЛЕТТА&quot; , 21*11*5 см</div>
<div class="a t" style="left:541.45px;top:621.04px;font-size:12px;line-height:12px;color:#505050;">4,000</div>
<div class="a t" style="left:615.15px;top:621.04px;font-size:12px;line-height:12px;color:#505050;">шт</div>
<div class="a t" style="left:700.95px;top:621.04px;font-size:12px;line-height:12px;color:#505050;">836,00</div>
<div class="a t" style="left:800.30px;top:621.04px;font-size:12px;line-height:12px;color:#505050;">5,00</div>
<div class="a t" style="left:849.25px;top:621.04px;font-size:12px;line-height:12px;color:#505050;">167,20</div>
<div class="a t" style="left:917.75px;top:621.04px;font-size:12px;line-height:12px;color:#505050;">50,00</div>
<div class="a t" style="left:969.60px;top:621.04px;font-size:12px;line-height:12px;color:#505050;letter-spacing:-0.175px;">1 672,...</div>
<div class="a t" style="left:1212.95px;top:621.04px;font-size:12px;line-height:12px;color:#505050;">1 504,80</div>
<div class="a" style="left:759px;top:395px;width:270px;height:253px;border:3px solid #f5a30a"></div>
<div class="a" style="left:12px;top:681px;width:1450px;height:1px;background:#dcdcdc"></div>
<div class="a" style="left:12px;top:688px;width:443px;height:30px;border:1px solid #8c8c8c;border-radius:6px;background:#fff"></div>
<div class="a t" style="left:18.95px;top:698.00px;font-size:13px;line-height:13px;color:#8c8c8c;letter-spacing:0.510px;">Комментарий</div>
<svg class="a" style="left:469px;top:694px;" width="14" height="20" viewBox="0 0 14 20" fill="none" stroke="#3d3d3d" stroke-width="1.5" stroke-linecap="round" stroke-linejoin="round"><circle cx="7" cy="4.2" r="1.5" fill="#8c8c8c" stroke="none"/><circle cx="7" cy="10" r="1.5" fill="#8c8c8c" stroke="none"/><circle cx="7" cy="15.8" r="1.5" fill="#8c8c8c" stroke="none"/></svg>
<div class="a" style="left:781px;top:677px;width:234px;height:45px;border:3px solid #f5a30a"></div>
<div class="a t" style="left:805.35px;top:698.00px;font-size:13px;line-height:13px;color:#484848;letter-spacing:-0.032px;">Скидка руч., Σ:</div>
<div class="a" style="left:899px;top:688px;width:111px;height:30px;border:1px solid #8c8c8c;border-radius:6px;background:#fff"></div>
<div class="a t" style="left:935.50px;top:698.00px;font-size:13px;line-height:13px;color:#444;letter-spacing:-0.257px;">1 672,00</div>
<svg class="a" style="left:990.5px;top:694.5px;" width="14" height="18" viewBox="0 0 14 18" fill="none" stroke="#a3a3a3" stroke-width="1.5" stroke-linecap="round" stroke-linejoin="round"><rect x="2.55" y="2.85" width="8.7" height="12.1" rx="1.4"/><path d="M5 5.6 H9.5 M5 8.5 H9.5 M5 10.6 H9.5 M5 12.6 H9.5" stroke-width="1"/></svg>
<div class="a t" style="left:1037.35px;top:698.00px;font-size:13px;line-height:13px;color:#484848;letter-spacing:0.200px;">НДС:</div>
<div class="a" style="left:1074px;top:688px;width:142px;height:30px;border:1px solid #c4c4c4;border-radius:6px;background:#f2f2f2"></div>
<div class="a t" style="left:1162.75px;top:698.00px;font-size:13px;line-height:13px;color:#444;letter-spacing:-0.343px;">5 365,61</div>
<div class="a t" style="left:1243.15px;top:698.00px;font-size:13px;line-height:13px;color:#484848;letter-spacing:0.220px;">Всего:</div>
<div class="a" style="left:1287px;top:688px;width:142px;height:30px;border:1px solid #8c8c8c;border-radius:6px;background:#fff"></div>
<div class="a t" style="left:1347.50px;top:698.00px;font-size:13px;line-height:13px;color:#444;letter-spacing:-0.256px;">32 193,60</div>
<svg class="a" style="left:1410px;top:694.5px;" width="14" height="18" viewBox="0 0 14 18" fill="none" stroke="#a3a3a3" stroke-width="1.5" stroke-linecap="round" stroke-linejoin="round"><rect x="2.55" y="2.85" width="8.7" height="12.1" rx="1.4"/><path d="M5 5.6 H9.5 M5 8.5 H9.5 M5 10.6 H9.5 M5 12.6 H9.5" stroke-width="1"/></svg>
<svg class="a" style="left:1444px;top:689px;" width="18" height="18" viewBox="0 0 18 18" fill="none" stroke="#8c8c8c" stroke-width="1.3" stroke-linecap="round" stroke-linejoin="round"><circle cx="8.9" cy="8.9" r="7.3"/><path d="M6 9.9 L8.9 7 L12 9.9"/></svg>
<div class="a" style="left:980px;top:740px;width:139px;height:32px;background:#ffdd00;border-radius:8px"></div>
<div class="a t" style="left:988.55px;top:750.40px;font-size:13px;line-height:13px;color:#262626;letter-spacing:0.106px;">Провести и закрыть</div>
<div class="a" style="left:1131px;top:740px;width:74px;height:32px;background:#d9d9d9;border-radius:8px"></div>
<div class="a t" style="left:1139.85px;top:750.40px;font-size:13px;line-height:13px;color:#1f1f1f;-webkit-text-stroke:0.3px #1f1f1f;letter-spacing:0.157px;">Записать</div>
<div class="a" style="left:1215px;top:740px;width:1px;height:32px;background:#cfcfcf"></div>
<div class="a" style="left:1225px;top:740px;width:75px;height:32px;background:#d9d9d9;border-radius:8px"></div>
<div class="a t" style="left:1233.35px;top:750.40px;font-size:13px;line-height:13px;color:#1f1f1f;-webkit-text-stroke:0.3px #1f1f1f;letter-spacing:0.179px;">Провести</div>
<div class="a" style="left:1312px;top:740px;width:151px;height:32px;background:#f2f2f2;border-radius:8px"></div>
<div class="a t" style="left:1320.30px;top:750.40px;font-size:13px;line-height:13px;color:#999;letter-spacing:-0.056px;">Отменить проведение</div>
</body></html>
